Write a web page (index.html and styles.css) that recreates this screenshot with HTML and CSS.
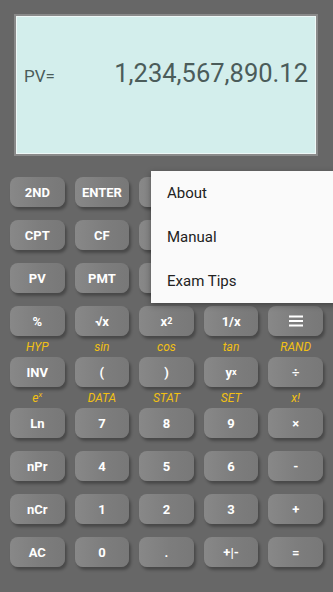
FILE: index.html
```html
<!DOCTYPE html>
<html>
    <head>
        <meta charset="utf-8"/>
        <link rel="stylesheet" href="styles.css">
    </head>
    <body>
        <div class="screen">
            <span class="screen-label">PV=</span>
            <span class="screen-value">1,234,567,890.12</span>
        </div>

        <main class="keys">
            <div class="row">
                <button>2ND</button><button>ENTER</button><button></button><button></button><button></button>
            </div>
            <div class="row">
                <button>CPT</button><button>CF</button><button></button><button></button><button></button>
            </div>
            <div class="row">
                <button>PV</button><button>PMT</button><button></button><button></button><button></button>
            </div>
            <div class="row">
                <button>%</button><button>√x</button><button>x<sup>2</sup></button><button>1/x</button>
                <button>
                    <svg width="16" height="12" viewBox="0 0 16 12"><path d="M1 1.5h14M1 6h14M1 10.5h14" stroke="#fff" stroke-width="2"/></svg>
                </button>
            </div>
            <div class="labels">
                <span>HYP</span><span>sin</span><span>cos</span><span>tan</span><span>RAND</span>
            </div>
            <div class="row">
                <button>INV</button><button>(</button><button>)</button><button>y<sup>x</sup></button><button>÷</button>
            </div>
            <div class="labels">
                <span>e<sup>x</sup></span><span>DATA</span><span>STAT</span><span>SET</span><span>x!</span>
            </div>
            <div class="row">
                <button>Ln</button><button>7</button><button>8</button><button>9</button><button>×</button>
            </div>
            <div class="row">
                <button>nPr</button><button>4</button><button>5</button><button>6</button><button>-</button>
            </div>
            <div class="row">
                <button>nCr</button><button>1</button><button>2</button><button>3</button><button>+</button>
            </div>
            <div class="row">
                <button>AC</button><button>0</button><button>.</button><button>+|-</button><button>=</button>
            </div>
        </main>

        <ul class="menu">
            <li>About</li>
            <li>Manual</li>
            <li>Exam Tips</li>
        </ul>
    </body>
</html>
```

FILE: styles.css
```css
body {
    margin: 0;
    padding: 14px 0 0;
    height: 592px;
    box-sizing: border-box;
    background: #676767;
    font-family: Roboto, "Liberation Sans", sans-serif;
    overflow: hidden;
}

.screen {
    margin: 0 15px 0 14px;
    height: 142px;
    box-sizing: border-box;
    border: 2px solid #8a8a8a;
    box-shadow: inset 0 0 0 1px #eef8f7;
    background: #d3eeec;
    display: flex;
    align-items: baseline;
    justify-content: space-between;
    padding: 42px 8px 0 8px;
    color: #4b5c5a;
}

.screen-label {
    font-size: 17px;
}

.screen-value {
    font-size: 25.5px;
}

.keys {
    padding: 21px 10px 0;
    display: flex;
    flex-direction: column;
}

.row {
    display: grid;
    grid-template-columns: repeat(5, 1fr);
    column-gap: 10px;
    margin-top: 13px;
}

.row:first-child,
.labels + .row { margin-top: 0; }

.row button {
    height: 30px;
    border: none;
    border-radius: 8px;
    padding: 0;
    background: linear-gradient(to right, #888, #7d7d7d 55%, #787878);
    box-shadow: 2px 3px 3px rgba(0, 0, 0, 0.3);
    color: #fff;
    font-family: inherit;
    font-size: 13px;
    font-weight: bold;
    display: flex;
    align-items: center;
    justify-content: center;
}

sup {
    font-size: 9px;
    vertical-align: 5px;
    line-height: 0;
}

.labels {
    display: grid;
    grid-template-columns: repeat(5, 1fr);
    column-gap: 10px;
    height: 21px;
    align-items: center;
    text-align: center;
    color: #f2c014;
    font-size: 12px;
    font-style: italic;
}

.labels sup { font-size: 8px; }

.menu {
    position: absolute;
    top: 171px;
    left: 151px;
    width: 190px;
    margin: 0;
    padding: 0;
    list-style: none;
    background: #fafafa;
    box-shadow: 0 2px 6px rgba(0, 0, 0, 0.35);
}

.menu li {
    height: 44px;
    line-height: 44px;
    padding-left: 16px;
    font-size: 15px;
    color: #222;
}
```
